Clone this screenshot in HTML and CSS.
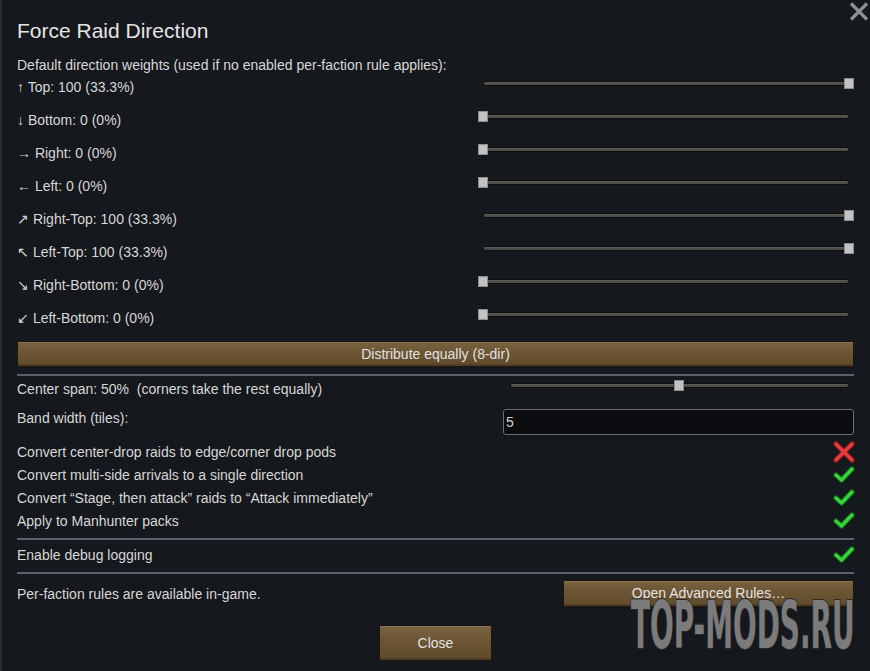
FILE: index.html
```html
<!DOCTYPE html>
<html>
<head>
<meta charset="utf-8">
<link rel="stylesheet" href="styles.css">
</head>
<body>
<div class="window">
  <button class="close-x" aria-label="Close">
    <svg width="20" height="19" viewBox="0 0 20 19"><path d="M2 1.5 L18 17.5 M18 1.5 L2 17.5" stroke="#8d9094" stroke-width="3.2" fill="none"/></svg>
  </button>
  <h1 class="title">Force Raid Direction</h1>
  <div class="intro">Default direction weights (used if no enabled per-faction rule applies):</div>

  <div class="dir-row"><span class="label">↑ Top: 100 (33.3%)</span><div class="slider"><div class="track"></div><div class="handle" style="left:366px"></div></div></div>
  <div class="dir-row"><span class="label">↓ Bottom: 0 (0%)</span><div class="slider"><div class="track"></div><div class="handle" style="left:0px"></div></div></div>
  <div class="dir-row"><span class="label">→ Right: 0 (0%)</span><div class="slider"><div class="track"></div><div class="handle" style="left:0px"></div></div></div>
  <div class="dir-row"><span class="label">← Left: 0 (0%)</span><div class="slider"><div class="track"></div><div class="handle" style="left:0px"></div></div></div>
  <div class="dir-row"><span class="label">↗ Right-Top: 100 (33.3%)</span><div class="slider"><div class="track"></div><div class="handle" style="left:366px"></div></div></div>
  <div class="dir-row"><span class="label">↖ Left-Top: 100 (33.3%)</span><div class="slider"><div class="track"></div><div class="handle" style="left:366px"></div></div></div>
  <div class="dir-row"><span class="label">↘ Right-Bottom: 0 (0%)</span><div class="slider"><div class="track"></div><div class="handle" style="left:0px"></div></div></div>
  <div class="dir-row"><span class="label">↙ Left-Bottom: 0 (0%)</span><div class="slider"><div class="track"></div><div class="handle" style="left:0px"></div></div></div>

  <button class="btn btn-wide">Distribute equally (8-dir)</button>
  <div class="sep sep-first"></div>

  <div class="span-row"><span class="label">Center span: 50%&nbsp; (corners take the rest equally)</span><div class="slider slider-span"><div class="track"></div><div class="handle" style="left:169px"></div></div></div>

  <div class="band-row"><span class="label">Band width (tiles):</span><div class="input">5</div></div>

  <div class="check-list">
    <div class="check-row"><span class="label">Convert center-drop raids to edge/corner drop pods</span>
      <svg class="icon" width="22" height="22" viewBox="0 0 22 22"><path d="M3 3 L19 19 M19 3 L3 19" stroke="#7a1416" stroke-width="5.5" stroke-linecap="round" fill="none"/><path d="M3 3 L19 19 M19 3 L3 19" stroke="#e23b3e" stroke-width="3.6" stroke-linecap="round" fill="none"/></svg>
    </div>
    <div class="check-row"><span class="label">Convert multi-side arrivals to a single direction</span>
      <svg class="icon" width="22" height="22" viewBox="0 0 22 22"><path d="M3 11 L8.5 16 L19 5" stroke="#0f5a12" stroke-width="5.5" stroke-linecap="round" stroke-linejoin="round" fill="none"/><path d="M3 11 L8.5 16 L19 5" stroke="#36d33c" stroke-width="3.4" stroke-linecap="round" stroke-linejoin="round" fill="none"/></svg>
    </div>
    <div class="check-row"><span class="label">Convert “Stage, then attack” raids to “Attack immediately”</span>
      <svg class="icon" width="22" height="22" viewBox="0 0 22 22"><path d="M3 11 L8.5 16 L19 5" stroke="#0f5a12" stroke-width="5.5" stroke-linecap="round" stroke-linejoin="round" fill="none"/><path d="M3 11 L8.5 16 L19 5" stroke="#36d33c" stroke-width="3.4" stroke-linecap="round" stroke-linejoin="round" fill="none"/></svg>
    </div>
    <div class="check-row"><span class="label">Apply to Manhunter packs</span>
      <svg class="icon" width="22" height="22" viewBox="0 0 22 22"><path d="M3 11 L8.5 16 L19 5" stroke="#0f5a12" stroke-width="5.5" stroke-linecap="round" stroke-linejoin="round" fill="none"/><path d="M3 11 L8.5 16 L19 5" stroke="#36d33c" stroke-width="3.4" stroke-linecap="round" stroke-linejoin="round" fill="none"/></svg>
    </div>
  </div>
  <div class="sep sep-mid"></div>
  <div class="check-row debug-row"><span class="label">Enable debug logging</span>
    <svg class="icon" width="22" height="22" viewBox="0 0 22 22"><path d="M3 11 L8.5 16 L19 5" stroke="#0f5a12" stroke-width="5.5" stroke-linecap="round" stroke-linejoin="round" fill="none"/><path d="M3 11 L8.5 16 L19 5" stroke="#36d33c" stroke-width="3.4" stroke-linecap="round" stroke-linejoin="round" fill="none"/></svg>
  </div>
  <div class="sep sep-last"></div>

  <div class="faction-row"><span class="label">Per-faction rules are available in-game.</span><button class="btn btn-adv"><span class="adv-text">Open Advanced Rules…</span></button></div>

  <div class="footer"><button class="btn btn-close">Close</button></div>

  <div class="watermark">TOP-MODS.RU</div>
</div>
</body>
</html>
```

FILE: styles.css
```css
html, body {
  margin: 0;
  padding: 0;
  width: 870px;
  height: 671px;
  overflow: hidden;
  background: #15181c;
}
.window {
  position: relative;
  box-sizing: border-box;
  width: 870px;
  height: 671px;
  overflow: hidden;
  border-left: 2px solid #2a2e33;
  padding: 0 16px 0 15px;
  display: flex;
  flex-direction: column;
  font-family: "Liberation Sans", Arial, sans-serif;
  font-size: 14px;
  color: #d7d7d7;
}
.close-x {
  position: absolute;
  top: 2px;
  right: 1px;
  padding: 0;
  border: 0;
  background: none;
  line-height: 0;
}
.title {
  margin: 19px 0 0 0;
  font-weight: normal;
  font-size: 21px;
  line-height: 24px;
  color: #e4e4e4;
}
.intro {
  margin-top: 14px;
  line-height: 16px;
}
.label {
  line-height: 16px;
  white-space: nowrap;
}
.dir-row {
  height: 33px;
  display: flex;
  justify-content: space-between;
  align-items: flex-start;
}
.dir-row .label { margin-top: 6px; }
.dir-row .slider { margin-top: 5px; }
.slider {
  position: relative;
  width: 376px;
  height: 10px;
  flex: none;
}
.slider-span { width: 349px; }
.track {
  position: absolute;
  left: 5px;
  right: 5px;
  top: 3px;
  height: 3px;
  background: #4c4c48;
  border: 1px solid #0c0d0f;
  border-radius: 2px;
  box-shadow: inset 0 1px 0 #5c5c57;
}
.handle {
  position: absolute;
  top: 0;
  width: 8px;
  height: 9px;
  background: #c2c2c2;
  border: 1px solid #8c8c8c;
}
.btn {
  font-family: "Liberation Sans", Arial, sans-serif;
  font-size: 14px;
  color: #e2e2e2;
  background: linear-gradient(#7a6340, #6d5633 40%, #5e4a2c);
  border: 1px solid #1b160f;
  box-shadow: inset 0 1px 0 #8a7350, inset 0 -2px 0 #4f3e24;
  padding: 0;
  cursor: pointer;
}
.btn-wide {
  margin-top: 4px;
  height: 26px;
  width: 100%;
}
.sep {
  height: 2px;
  background: #5d6167;
  flex: none;
}
.sep-first { margin-top: 7px; }
.span-row {
  height: 33px;
  display: flex;
  justify-content: space-between;
  align-items: flex-start;
}
.span-row .label { margin-top: 5px; }
.span-row .slider { margin-top: 4px; }
.band-row {
  display: flex;
  justify-content: space-between;
  align-items: flex-start;
}
.band-row .label { margin-top: 1px; }
.input {
  box-sizing: border-box;
  width: 351px;
  height: 26px;
  background: #0b0c0f;
  border: 1px solid #6a6e72;
  border-radius: 3px;
  padding-left: 2px;
  line-height: 24px;
  font-size: 14px;
  color: #d2d2d2;
}
.check-list {
  margin-top: 5px;
  display: flex;
  flex-direction: column;
}
.check-row {
  height: 23px;
  display: flex;
  justify-content: space-between;
  align-items: center;
}
.check-row .icon {
  margin-right: -1px;
  flex: none;
}
.sep-mid { margin-top: 6px; }
.debug-row { margin-top: 3px; }
.sep-last { margin-top: 6px; }
.faction-row {
  display: flex;
  justify-content: space-between;
  align-items: center;
  margin-top: 6px;
}
.btn-adv {
  width: 291px;
  height: 27px;
  display: flex;
  align-items: flex-start;
  justify-content: center;
}
.adv-text {
  line-height: 16px;
  margin-top: 4px;
}
.footer {
  display: flex;
  justify-content: center;
  margin-top: 18px;
}
.btn-close {
  width: 113px;
  height: 36px;
  font-size: 14px;
}
.watermark {
  position: absolute;
  left: 629px;
  top: 593px;
  white-space: nowrap;
  font-family: "DejaVu Sans Condensed", "Liberation Sans", sans-serif;
  font-stretch: condensed;
  font-weight: bold;
  font-size: 62px;
  line-height: 62px;
  color: #7b7b7b;
  -webkit-text-stroke: 2px #2b2b2b;
  paint-order: stroke fill;
  letter-spacing: 0;
  transform-origin: left top;
  transform: scaleX(0.5) scaleY(1.05);
}
```
